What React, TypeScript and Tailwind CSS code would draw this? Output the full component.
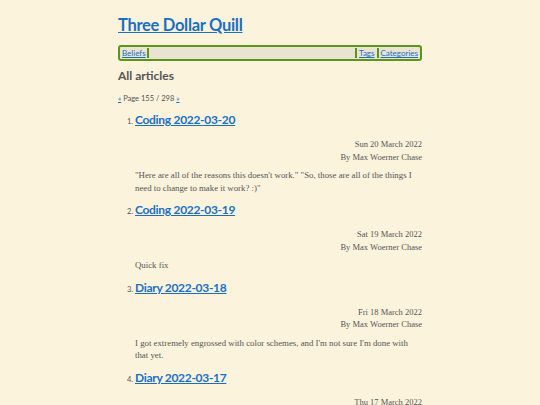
import React from "react";

const items = [
  { n: 1, title: "Coding 2022-03-20", date: "Sun 20 March 2022", summary: "\"Here are all of the reasons this doesn't work.\" \"So, those are all of the things I need to change to make it work? :)\"" },
  { n: 2, title: "Coding 2022-03-19", date: "Sat 19 March 2022", summary: "Quick fix" },
  { n: 3, title: "Diary 2022-03-18", date: "Fri 18 March 2022", summary: "I got extremely engrossed with color schemes, and I'm not sure I'm done with that yet." },
  { n: 4, title: "Diary 2022-03-17", date: "Thu 17 March 2022", summary: "" },
];

const head = { fontFamily: "Lato, 'Open Sans', sans-serif" };
const body = { fontFamily: "'Liberation Serif', serif" };

export default function App() {
  return (
    <div className="min-h-[405px] w-full bg-[#fcf3dc] text-[#555]" style={body}>
      <div className="mx-auto w-[304px] pt-[14px]">
        <h1 className="text-[16.5px] font-bold leading-[22px] tracking-[-0.3px]" style={head}>
          <a className="text-[#1a6fc4] underline">Three Dollar Quill</a>
        </h1>
        <nav className="mt-[9px] flex h-[16px] items-center rounded-[3px] border-2 border-[#5a961e] bg-[#ebe3d1] text-[8px] leading-none" style={head}>
          <a className="pl-[2px] pr-[1px] text-[#1a6fc4] underline">Beliefs</a>
          <span className="h-[10px] w-[2px] bg-[#5a961e]" />
          <span className="flex-1" />
          <span className="h-[10px] w-[2px] bg-[#5a961e]" />
          <a className="px-[2px] text-[#1a6fc4] underline">Tags</a>
          <span className="h-[10px] w-[2px] bg-[#5a961e]" />
          <a className="px-[2px] text-[#1a6fc4] underline">Categories</a>
        </nav>
        <h2 className="mt-[6px] text-[12px] font-bold leading-[18px]" style={head}>All articles</h2>
        <p className="mt-[9px] text-[7.5px] leading-[10px]" style={head}>
          <a className="text-[#1a6fc4] underline">«</a> Page 155 / 298 <a className="text-[#1a6fc4] underline">»</a>
        </p>
        <ol className="mt-[7px] pl-[17px]">
          {items.map((it) => (
            <li key={it.n} className="mb-[7px]">
              <div className="flex items-baseline">
                <span className="-ml-[8px] w-[8px] text-[7.5px]" style={head}>{it.n}.</span>
                <a className="text-[12px] font-bold leading-[18px] tracking-[-0.3px] text-[#1a6fc4] underline" style={head}>{it.title}</a>
              </div>
              <div className="mt-[9px] text-right text-[8.5px] leading-[12.5px]">
                <div>{it.date}</div>
                <div>By Max Woerner Chase</div>
              </div>
              {it.summary && (
                <p className="mt-[6px] text-[8.8px] leading-[12.5px]">{it.summary}</p>
              )}
            </li>
          ))}
        </ol>
      </div>
    </div>
  );
}
